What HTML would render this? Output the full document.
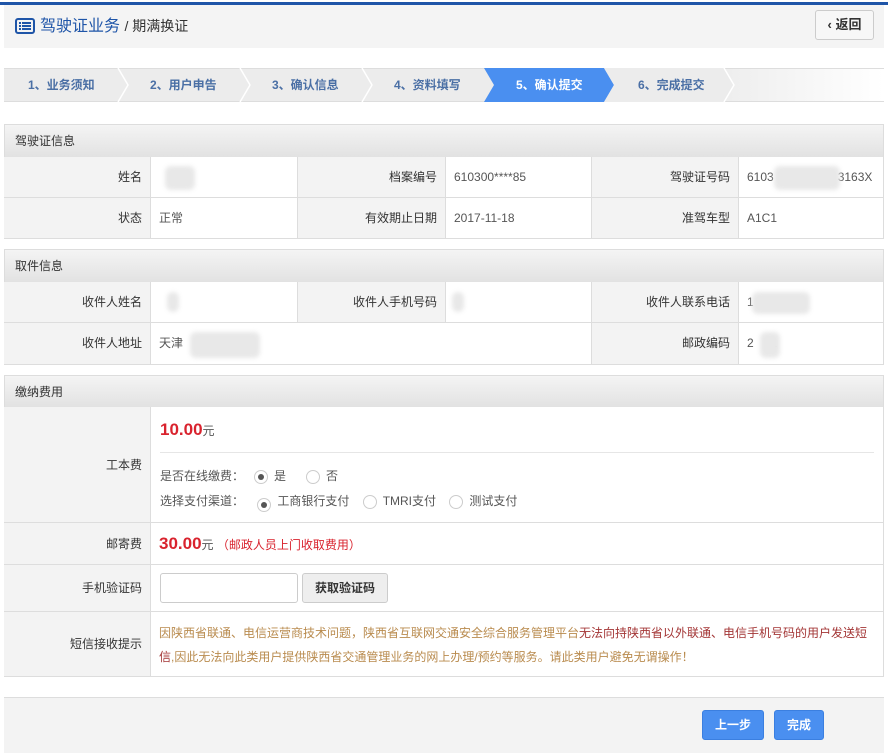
<!DOCTYPE html>
<html><head><meta charset="utf-8"><style>
*{margin:0;padding:0;box-sizing:border-box}
body{width:888px;height:756px;background:#fff;font-family:"Liberation Sans","Noto Sans CJK SC",sans-serif;font-size:12px;color:#333;position:relative;overflow:hidden}
.a{position:absolute}
.hdr{background:linear-gradient(#f4f4f4,#e2e2e2);border:1px solid #ddd;font-size:12px;color:#333;padding-left:10px;line-height:32px}
.c{position:absolute;border-right:1px solid #ddd;border-bottom:1px solid #ddd;line-height:40px;padding:0 8px}
.l{background:#f3f3f3;text-align:right;color:#333}
.v{background:#fff;color:#555}
.blur{position:absolute;background:#e8e8e8;border-radius:6px;filter:blur(2px)}
.step{position:absolute;top:68px;height:34px;line-height:34px;color:#4a6fa5;font-size:12px;font-weight:bold}
.radio{display:inline-block;width:14px;height:14px;border:1px solid #ccc;border-radius:50%;vertical-align:middle;position:relative;margin-right:6px;background:#fff}
.radio.on::after{content:"";position:absolute;left:3px;top:3px;width:6px;height:6px;border-radius:50%;background:#555}
</style></head><body>
<div class="a" style="left:0;top:2px;width:888px;height:3px;background:#1f55a8"></div>
<div class="a" style="left:4px;top:5px;width:880px;height:43px;background:#f4f4f4"></div>
<svg class="a" style="left:15px;top:18px" width="20" height="16" viewBox="0 0 20 16"><rect x="1" y="1" width="18" height="14" rx="2" fill="none" stroke="#1f55a8" stroke-width="2"/><rect x="4" y="4" width="2" height="2" fill="#1f55a8"/><rect x="7" y="4" width="9" height="2" fill="#1f55a8"/><rect x="4" y="7" width="2" height="2" fill="#1f55a8"/><rect x="7" y="7" width="9" height="2" fill="#1f55a8"/><rect x="4" y="10" width="2" height="2" fill="#1f55a8"/><rect x="7" y="10" width="9" height="2" fill="#1f55a8"/></svg>
<div class="a" style="left:40px;top:15px;font-size:16px;color:#1f55a8;line-height:22px">驾驶证业务 <span style="color:#333;font-size:14px">/ 期满换证</span></div>
<div class="a" style="left:815px;top:10px;width:59px;height:30px;border:1px solid #ccc;border-radius:3px;background:#f7f7f7;text-align:center;line-height:28px;font-size:13px;color:#333;font-weight:bold">‹ 返回</div>

<div class="a" style="left:4px;top:68px;width:880px;height:34px;background:linear-gradient(90deg,#ececec 0%,#ececec 80%,#fff 100%);border-top:1px solid #ddd;border-bottom:1px solid #ddd"></div>
<svg class="a" style="left:4px;top:68px" width="880" height="34">
<polygon points="480,0 600,0 610,17 600,34 480,34 490,17" fill="#4a8ff0"/>
<polyline points="114,0 124,17 114,34" fill="none" stroke="#fff" stroke-width="1.5"/>
<polyline points="236,0 246,17 236,34" fill="none" stroke="#fff" stroke-width="1.5"/>
<polyline points="358,0 368,17 358,34" fill="none" stroke="#fff" stroke-width="1.5"/>
<polygon points="600,0 720,0 730,17 720,34 600,34 610,17" fill="#ececec"/>
<polyline points="720,0 730,17 720,34" fill="none" stroke="#fff" stroke-width="1.5"/>
</svg>
<div class="step" style="left:28px">1、业务须知</div>
<div class="step" style="left:150px">2、用户申告</div>
<div class="step" style="left:272px">3、确认信息</div>
<div class="step" style="left:394px">4、资料填写</div>
<div class="step" style="left:516px;color:#fff">5、确认提交</div>
<div class="step" style="left:638px">6、完成提交</div>

<div class="a hdr" style="left:4px;top:124px;width:880px;height:34px">驾驶证信息</div>
<div class="a" style="left:4px;top:157px;width:880px;height:82px;border-left:1px solid #ddd"></div>
<div class="c l" style="left:4px;top:157px;width:147px;height:41px">姓名</div>
<div class="c v" style="left:151px;top:157px;width:147px;height:41px"></div>
<div class="c l" style="left:298px;top:157px;width:148px;height:41px">档案编号</div>
<div class="c v" style="left:446px;top:157px;width:146px;height:41px">610300****85</div>
<div class="c l" style="left:592px;top:157px;width:147px;height:41px">驾驶证号码</div>
<div class="c v" style="left:739px;top:157px;width:145px;height:41px">6103<span style="display:inline-block;width:64px"></span>3163X</div>
<div class="c l" style="left:4px;top:198px;width:147px;height:41px">状态</div>
<div class="c v" style="left:151px;top:198px;width:147px;height:41px">正常</div>
<div class="c l" style="left:298px;top:198px;width:148px;height:41px">有效期止日期</div>
<div class="c v" style="left:446px;top:198px;width:146px;height:41px">2017-11-18</div>
<div class="c l" style="left:592px;top:198px;width:147px;height:41px">准驾车型</div>
<div class="c v" style="left:739px;top:198px;width:145px;height:41px">A1C1</div>
<div class="blur" style="left:165px;top:166px;width:30px;height:24px"></div>
<div class="blur" style="left:774px;top:166px;width:66px;height:24px"></div>

<div class="a hdr" style="left:4px;top:249px;width:880px;height:34px">取件信息</div>
<div class="a" style="left:4px;top:282px;width:880px;height:83px;border-left:1px solid #ddd"></div>
<div class="c l" style="left:4px;top:282px;width:147px;height:41px">收件人姓名</div>
<div class="c v" style="left:151px;top:282px;width:147px;height:41px"></div>
<div class="c l" style="left:298px;top:282px;width:148px;height:41px">收件人手机号码</div>
<div class="c v" style="left:446px;top:282px;width:146px;height:41px"></div>
<div class="c l" style="left:592px;top:282px;width:147px;height:41px">收件人联系电话</div>
<div class="c v" style="left:739px;top:282px;width:145px;height:41px">1</div>
<div class="c l" style="left:4px;top:323px;width:147px;height:42px">收件人地址</div>
<div class="c v" style="left:151px;top:323px;width:441px;height:42px">天津</div>
<div class="c l" style="left:592px;top:323px;width:147px;height:42px">邮政编码</div>
<div class="c v" style="left:739px;top:323px;width:145px;height:42px">2&nbsp;&nbsp;&nbsp;&nbsp;&nbsp;1</div>
<div class="blur" style="left:167px;top:292px;width:12px;height:20px"></div>
<div class="blur" style="left:452px;top:292px;width:12px;height:20px"></div>
<div class="blur" style="left:752px;top:292px;width:58px;height:22px"></div>
<div class="blur" style="left:190px;top:332px;width:70px;height:26px"></div>
<div class="blur" style="left:760px;top:332px;width:20px;height:26px"></div>

<div class="a hdr" style="left:4px;top:375px;width:880px;height:33px">缴纳费用</div>
<div class="a" style="left:4px;top:407px;width:880px;height:270px;border-left:1px solid #ddd"></div>
<div class="c l" style="left:4px;top:407px;width:147px;height:116px;line-height:116px">工本费</div>
<div class="c v" style="left:151px;top:407px;width:733px;height:116px"></div>
<div class="a" style="left:160px;top:417px;color:#d9232e;font-size:17px;font-weight:bold;line-height:26px">10.00<span style="font-size:12px;font-weight:normal;color:#555">元</span></div>
<div class="a" style="left:160px;top:452px;width:714px;height:1px;background:#e6e6e6"></div>
<div class="a" style="left:160px;top:467px;color:#555;line-height:18px">是否在线缴费： &nbsp;&nbsp;<span class="radio on"></span>是 &nbsp;&nbsp;&nbsp;&nbsp;&nbsp;<span class="radio"></span>否</div>
<div class="a" style="left:160px;top:492px;color:#555;line-height:18px">选择支付渠道： &nbsp;&nbsp;&nbsp;<span class="radio on" style="margin-top:6px"></span>工商银行支付 &nbsp;&nbsp;&nbsp;<span class="radio"></span>TMRI支付 &nbsp;&nbsp;&nbsp;<span class="radio"></span>测试支付</div>
<div class="c l" style="left:4px;top:523px;width:147px;height:42px;line-height:42px">邮寄费</div>
<div class="c v" style="left:151px;top:523px;width:733px;height:42px;line-height:42px"><span style="color:#d9232e;font-size:17px;font-weight:bold">30.00</span><span style="color:#555">元</span> <span style="color:#d9232e">（邮政人员上门收取费用）</span></div>
<div class="c l" style="left:4px;top:565px;width:147px;height:47px;line-height:47px">手机验证码</div>
<div class="c v" style="left:151px;top:565px;width:733px;height:47px"></div>
<div class="a" style="left:160px;top:573px;width:138px;height:30px;border:1px solid #ccc;border-radius:3px;background:#fff"></div>
<div class="a" style="left:302px;top:573px;width:86px;height:30px;border:1px solid #ccc;border-radius:3px;background:#eee;text-align:center;line-height:28px;font-weight:bold;color:#333">获取验证码</div>
<div class="c l" style="left:4px;top:612px;width:147px;height:65px;line-height:65px">短信接收提示</div>
<div class="c v" style="left:151px;top:612px;width:733px;height:65px;line-height:24px;padding-top:9px;color:#b98b4e">因陕西省联通、电信运营商技术问题，陕西省互联网交通安全综合服务管理平台<span style="color:#a33535">无法向持陕西省以外联通、电信手机号码的用户发送短信</span>,因此无法向此类用户提供陕西省交通管理业务的网上办理/预约等服务。请此类用户避免无谓操作！</div>

<div class="a" style="left:4px;top:697px;width:880px;height:56px;background:#f3f3f3;border-top:1px solid #ddd"></div>
<div class="a" style="left:702px;top:710px;width:62px;height:30px;background:#4a8ff0;border:1px solid #3b7fe0;border-radius:3px;color:#fff;font-weight:bold;text-align:center;line-height:28px">上一步</div>
<div class="a" style="left:774px;top:710px;width:50px;height:30px;background:#4a8ff0;border:1px solid #3b7fe0;border-radius:3px;color:#fff;font-weight:bold;text-align:center;line-height:28px">完成</div>
</body></html>
